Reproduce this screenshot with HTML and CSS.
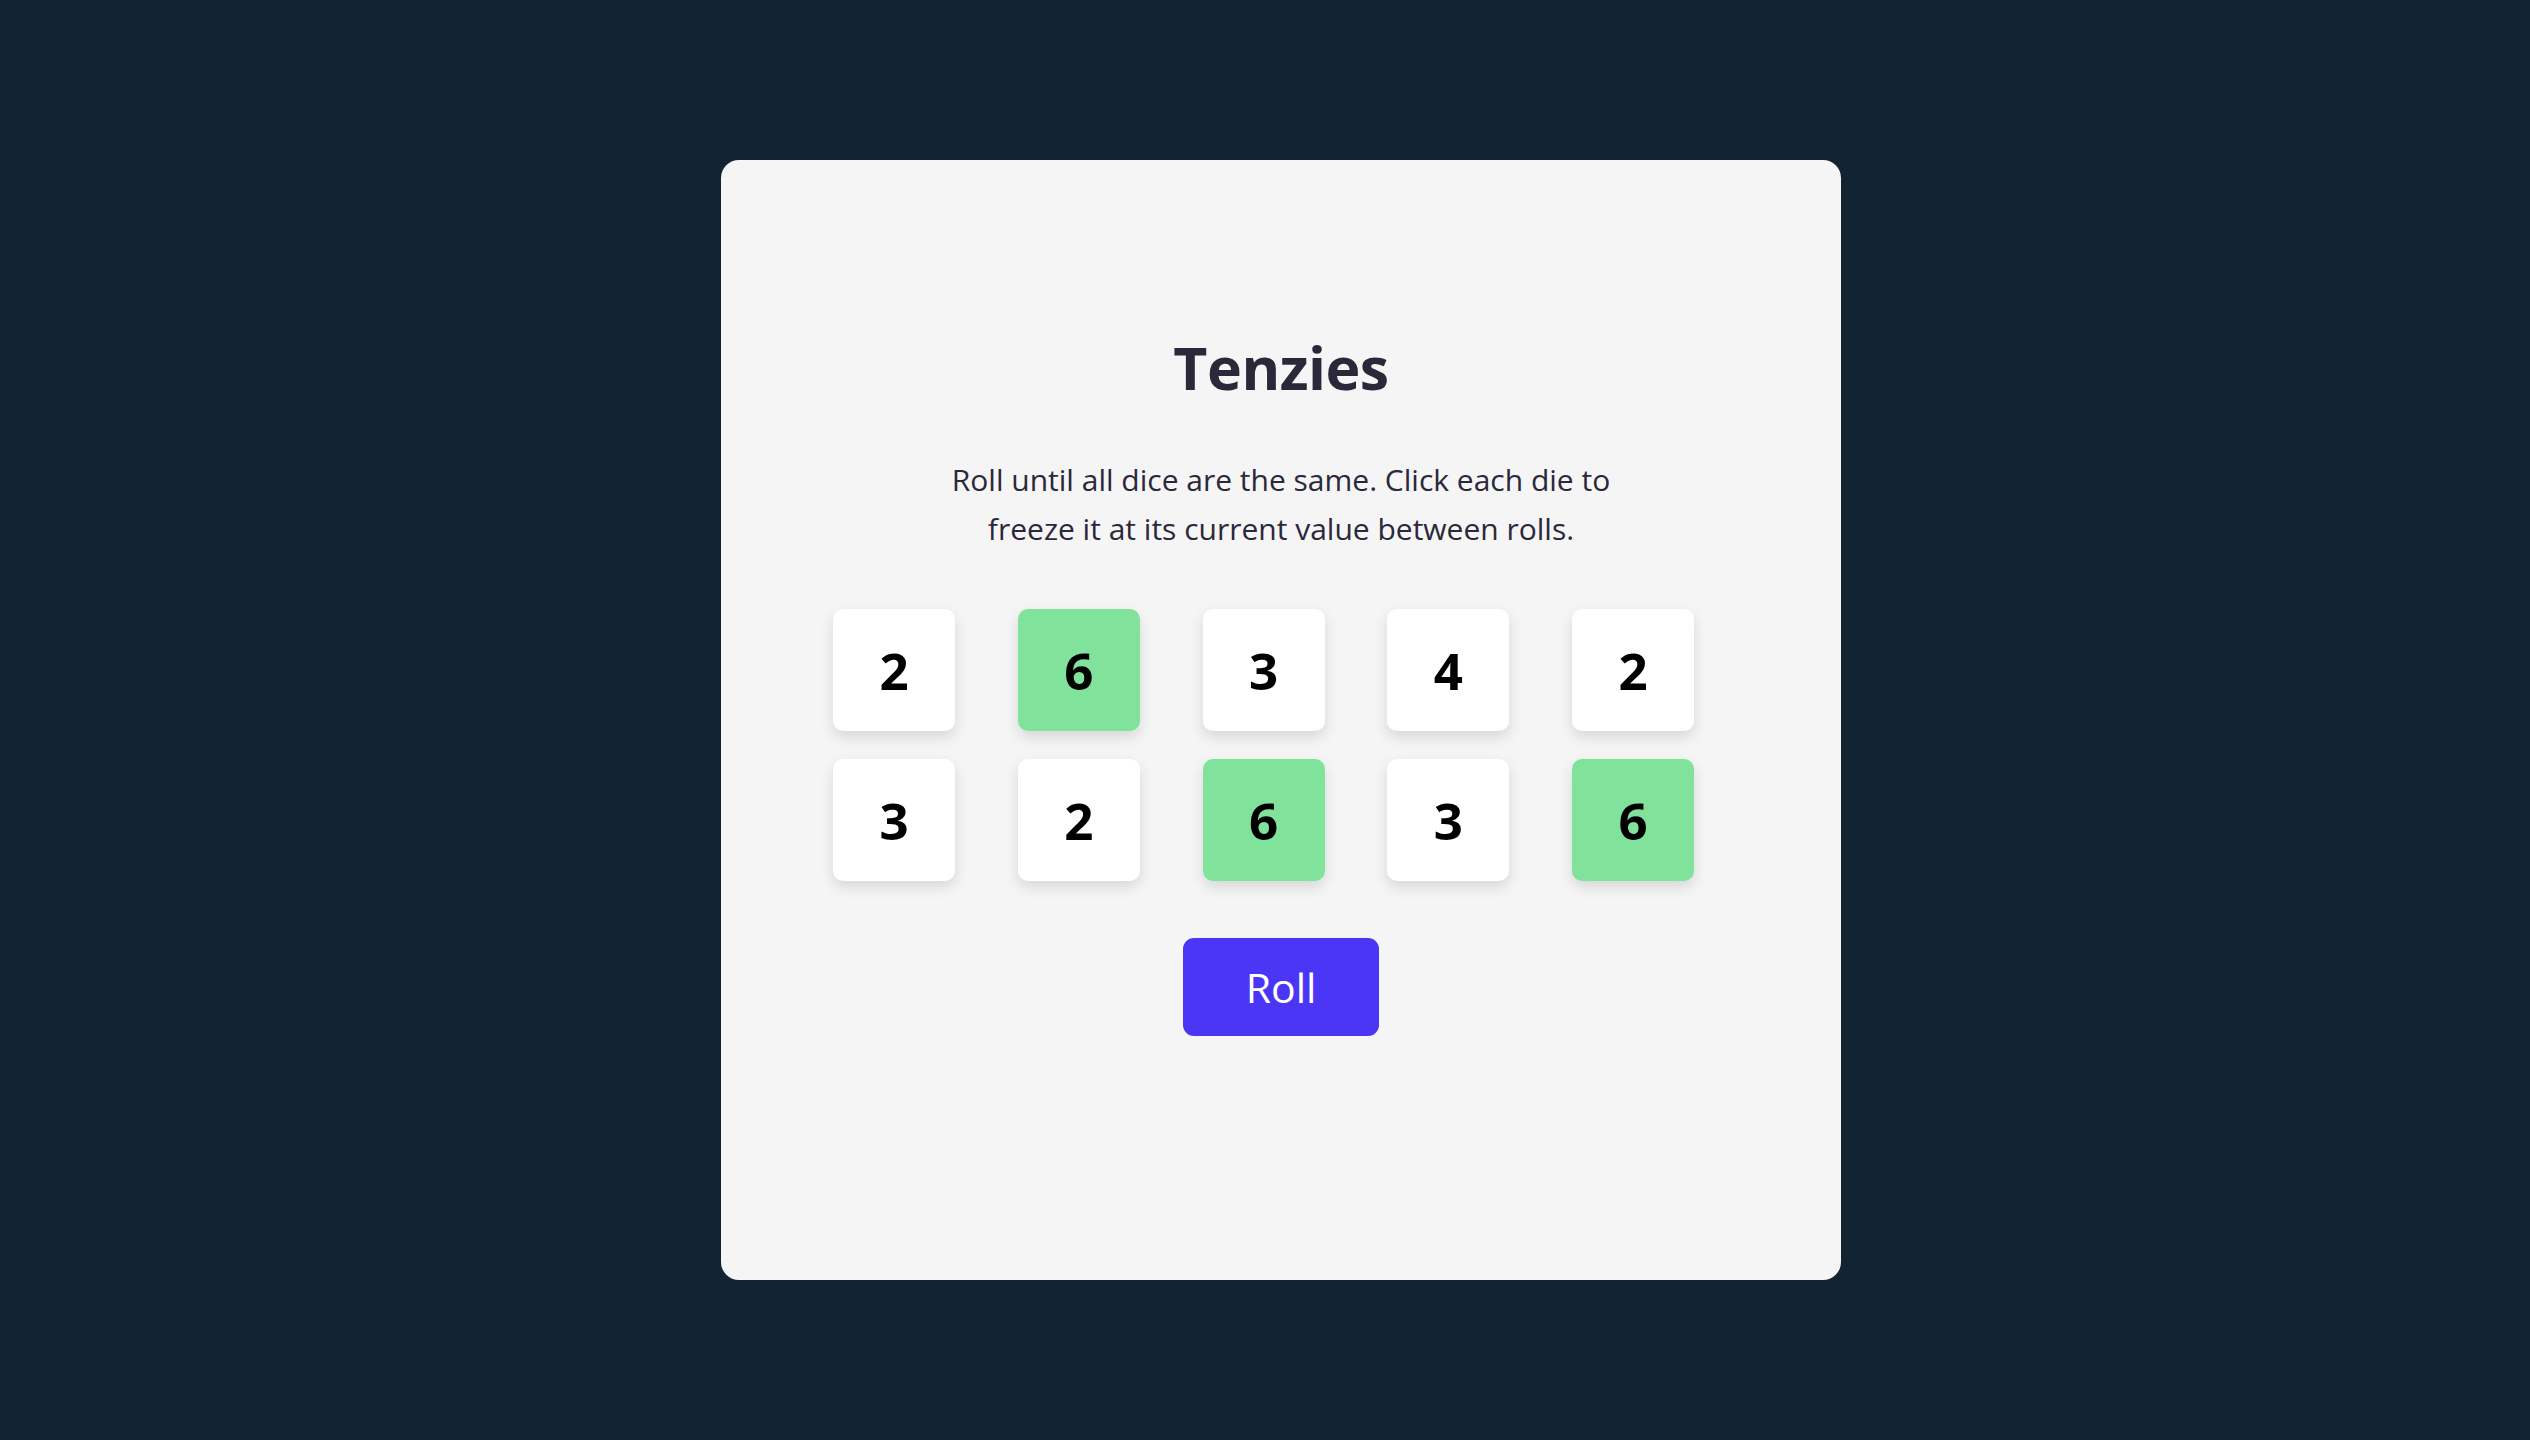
FILE: index.html
```html
<!DOCTYPE html>
<html lang="en">
<head>
<meta charset="utf-8">
<title>Tenzies</title>
<link rel="stylesheet" href="styles.css">
</head>
<body>
<main class="board">
  <h1 class="title">Tenzies</h1>
  <p class="instructions">Roll until all dice are the same. Click each die to freeze it at its current value between rolls.</p>
  <div class="dice">
    <button class="die">2</button>
    <button class="die held">6</button>
    <button class="die">3</button>
    <button class="die">4</button>
    <button class="die">2</button>
    <button class="die">3</button>
    <button class="die">2</button>
    <button class="die held">6</button>
    <button class="die">3</button>
    <button class="die held">6</button>
  </div>
  <button class="roll">Roll</button>
</main>
</body>
</html>
```
FILE: styles.css
```css
* { box-sizing: border-box; }

html, body {
  margin: 0;
  padding: 0;
}

body {
  background: #122333;
  min-height: 100vh;
  display: flex;
  justify-content: center;
  align-items: center;
  font-family: "Open Sans", "Noto Sans", sans-serif;
}

.board {
  width: 1120px;
  height: 1120px;
  margin-left: 32px;
  background: #f5f5f5;
  border-radius: 18px;
  padding: 177px 112px 0;
  display: flex;
  flex-direction: column;
  align-items: center;
}

.title {
  margin: 0;
  font-size: 59px;
  line-height: 60px;
  font-weight: 700;
  color: #2b283a;
  letter-spacing: -0.5px;
}

.instructions {
  margin: 59px 0 0;
  max-width: 720px;
  text-align: center;
  font-size: 30px;
  line-height: 48.5px;
  color: #2b283a;
}

.dice {
  margin-top: 56px;
  width: 100%;
  display: grid;
  grid-template-columns: repeat(5, 1fr);
  gap: 28px;
  justify-items: start;
}

.die {
  width: 122px;
  height: 122px;
  border: none;
  border-radius: 10px;
  background: #ffffff;
  box-shadow: 0 6px 14px rgba(0, 0, 0, 0.12);
  font-family: "Open Sans", "Noto Sans", sans-serif;
  font-size: 51px;
  font-weight: 700;
  color: #000000;
  padding: 0;
  display: flex;
  align-items: center;
  justify-content: center;
}

.die.held {
  background: #81e29b;
}

.roll {
  margin-top: 57px;
  width: 196px;
  height: 98px;
  border: none;
  border-radius: 11px;
  background: #4b36f6;
  color: #ffffff;
  font-family: "Open Sans", "Noto Sans", sans-serif;
  font-size: 41px;
  font-weight: 500;
  padding: 0;
}
```
